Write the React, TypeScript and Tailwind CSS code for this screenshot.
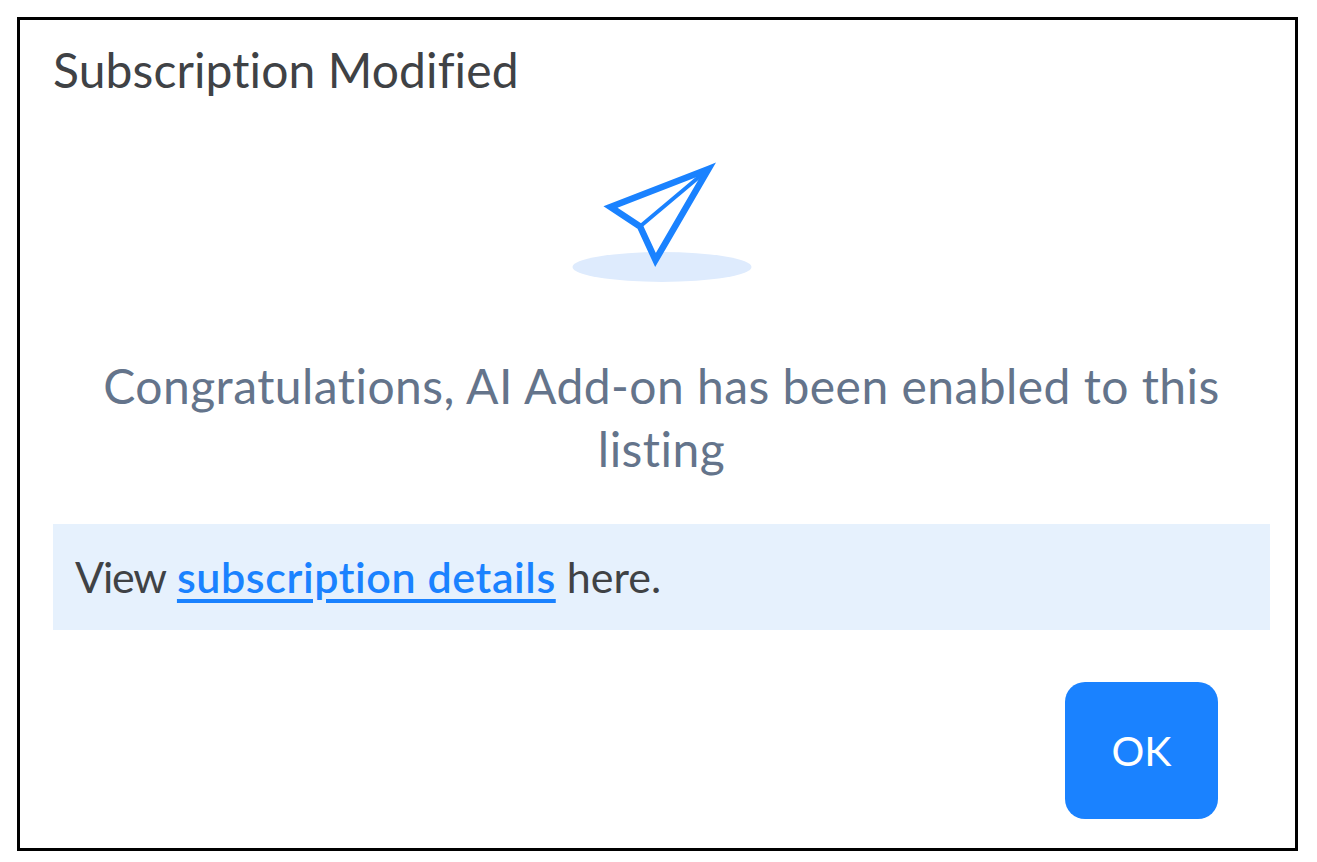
export default function App() {
  return (
    <div className="w-[1317px] h-[862px] bg-white pt-[17px] pl-[17px] font-['Lato','Liberation_Sans',sans-serif]">
      <div className="w-[1281px] h-[834px] border-[3px] border-black bg-white pl-[33px] pr-[25px] flex flex-col">
        <h1 className="mt-[20px] h-[60px] text-[48px] leading-[60px] text-[#3f4245] font-normal tracking-[0.1px]">
          Subscription Modified
        </h1>
        <div className="mt-[62px] flex justify-center">
          <svg width="184" height="124" viewBox="0 0 184 124" className="block" fill="none">
            <ellipse cx="92" cy="105" rx="89.5" ry="15" fill="#deebfd" />
            <path
              d="M138.5 7 L40.5 45 L70 64.5 L85.5 98 Z"
              stroke="#1a82ff"
              strokeWidth="6.5"
              strokeMiterlimit="10"
            />
            <path d="M70 64.5 L138.5 7" stroke="#1a82ff" strokeWidth="4" />
          </svg>
        </div>
        <p className="mt-[68px] mx-auto w-[1180px] text-center text-[48px] leading-[63px] text-[#64748b] tracking-[0.45px]">
          Congratulations, AI Add-on has been enabled to this listing
        </p>
        <div className="mt-[44px] h-[106px] bg-[#e6f1fd] pl-[22px] flex items-center text-[43px] text-[#3f4245]">
          <span>
            <span className="tracking-[-1.2px]">View</span>{" "}
            <a href="#" className="text-[#1a82ff] font-semibold tracking-[0.6px] underline decoration-[4px] underline-offset-[6px]">
              subscription details
            </a>{" "}
            here.
          </span>
        </div>
        <div className="mt-[52px] flex justify-end pr-[52px]">
          <button className="w-[153px] h-[137px] rounded-[20px] bg-[#1a82ff] text-white text-[41px]">OK</button>
        </div>
      </div>
    </div>
  );
}
